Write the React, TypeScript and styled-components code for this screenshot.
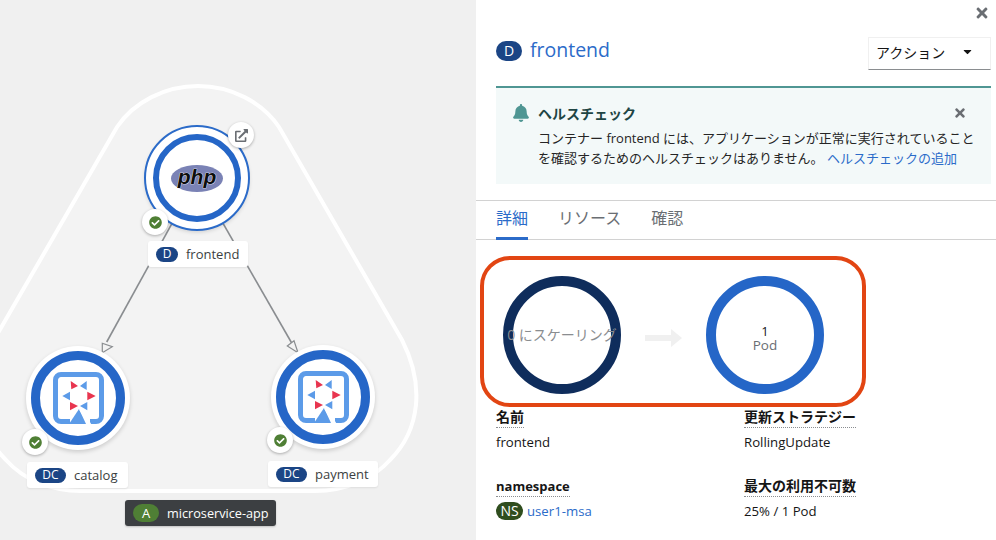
import React from "react";
import styled, { createGlobalStyle } from "styled-components";
import { FaBell, FaCaretDown, FaCheckCircle, FaExternalLinkAlt, FaTimes } from "react-icons/fa";

const FONT = `"Open Sans", "Noto Sans CJK JP", sans-serif`;

const GlobalStyle = createGlobalStyle`
  html, body {
    margin: 0;
    height: 540px;
    overflow: hidden;
    background: #fff;
    font-family: ${FONT};
  }
`;

const Page = styled.div`
  display: flex;
  width: 996px;
  height: 540px;
  overflow: hidden;
  color: #151515;
  font-size: 14px;
`;

const Canvas = styled.div`
  position: relative;
  flex: 0 0 476px;
  height: 540px;
  overflow: hidden;
  background: #f0f0f0;
`;

const Backdrop = styled.svg`
  position: absolute;
  inset: 0;
`;

const Node = styled.div<{ $x: number; $y: number }>`
  position: absolute;
  left: ${(p) => p.$x - 52}px;
  top: ${(p) => p.$y - 52}px;
  width: 104px;
  height: 104px;
  box-sizing: border-box;
  display: flex;
  align-items: center;
  justify-content: center;
  border-radius: 50%;
  background: #fff;
  box-shadow: 0 2px 4px rgba(3, 3, 3, 0.16);
`;

const SelectedRim = styled.div`
  position: absolute;
  inset: -1px;
  border: 2px solid #2b6bc9;
  border-radius: 50%;
`;

const NodeRing = styled.div<{ $size: number; $width: number }>`
  flex: none;
  box-sizing: border-box;
  width: ${(p) => p.$size}px;
  height: ${(p) => p.$size}px;
  display: flex;
  align-items: center;
  justify-content: center;
  border: ${(p) => p.$width}px solid #2566c7;
  border-radius: 50%;
  background: #fff;
  svg {
    flex: none;
  }
`;

const RoundBadge = styled.div<{ $x: number; $y: number }>`
  position: absolute;
  left: ${(p) => p.$x - 13}px;
  top: ${(p) => p.$y - 13}px;
  width: 26px;
  height: 26px;
  display: flex;
  align-items: center;
  justify-content: center;
  border-radius: 50%;
  background: #fff;
  box-shadow: 0 1px 3px rgba(3, 3, 3, 0.3);
  color: #4f7f35;
  font-size: 13px;
  svg.link {
    color: #6a6e73;
    font-size: 13px;
  }
`;

const NodeLabel = styled.div<{ $x: number; $y: number; $w: number; $dark?: boolean }>`
  position: absolute;
  left: ${(p) => p.$x}px;
  top: ${(p) => p.$y}px;
  width: ${(p) => p.$w}px;
  height: 26px;
  box-sizing: border-box;
  display: flex;
  align-items: center;
  gap: 8px;
  padding-left: 8px;
  border-radius: 3px;
  background: ${(p) => (p.$dark ? "#3c3f42" : "#fff")};
  color: ${(p) => (p.$dark ? "#fff" : "#3c3f42")};
  font-size: ${(p) => (p.$dark ? 12.7 : 13)}px;
  box-shadow: ${(p) => (p.$dark ? "0 1px 2px rgba(3,3,3,.2)" : "0 1px 2px rgba(3,3,3,.08)")};
`;

const KindBadge = styled.span<{ $bg: string; $w?: number; $h?: number; $fs?: number }>`
  flex: none;
  display: inline-flex;
  align-items: center;
  justify-content: center;
  width: ${(p) => p.$w ?? 25}px;
  height: ${(p) => p.$h ?? 15}px;
  border-radius: 10px;
  background: ${(p) => p.$bg};
  color: #fff;
  font-size: ${(p) => p.$fs ?? 12}px;
  line-height: 1;
`;

const Panel = styled.div`
  flex: 1;
  box-sizing: border-box;
  height: 540px;
  display: flex;
  flex-direction: column;
  background: #fff;
  > * {
    flex-shrink: 0;
  }
`;

const CloseRow = styled.div`
  height: 37px;
  display: flex;
  justify-content: flex-end;
  padding: 5px 6px 0 0;
  box-sizing: border-box;
  color: #6a6e73;
  font-size: 16px;
`;

const Header = styled.div`
  display: flex;
  justify-content: space-between;
  height: 49px;
  padding: 0 5px 0 20px;
`;

const TitleWrap = styled.div`
  display: flex;
  align-items: center;
  gap: 8px;
  height: 28px;
`;

const Title = styled.h1`
  margin: -3px 0 0;
  color: #2b6bc9;
  font-size: 19.5px;
  font-weight: 500;
`;

const ActionSelect = styled.div`
  box-sizing: border-box;
  width: 123px;
  height: 33px;
  display: flex;
  align-items: center;
  justify-content: space-between;
  padding: 0 16px 4px 7px;
  border: 1px solid #f0f0f0;
  border-bottom: 1px solid #8a8d90;
  font-size: 14px;
  svg {
    font-size: 13px;
  }
`;

const Alert = styled.div`
  box-sizing: border-box;
  margin: 0 5px 0 20px;
  height: 98px;
  padding: 15px 24px 0 16px;
  display: grid;
  grid-template-columns: 26px 1fr 14px;
  grid-template-rows: 21px auto;
  background: #f3f9f9;
  border-top: 2px solid #4f9693;
`;

const AlertIcon = styled.div`
  color: #4f9693;
  font-size: 18px;
  line-height: 1;
  margin-top: 1px;
`;

const AlertTitle = styled.div`
  color: #1e4544;
  font-weight: 700;
  font-size: 14px;
`;

const AlertClose = styled.div`
  color: #6a6e73;
  font-size: 14px;
  line-height: 1;
  margin-top: 3px;
`;

const AlertBody = styled.div`
  grid-column: 2 / 4;
  margin-top: 4px;
  font-size: 13px;
  line-height: 20px;
  color: #252525;
  white-space: nowrap;
`;

const Link = styled.a`
  color: #2b6bc9;
`;

const Tabs = styled.div`
  display: flex;
  gap: 30px;
  height: 40px;
  box-sizing: border-box;
  margin-top: 16px;
  padding-left: 20px;
  border-top: 1px solid #d2d2d2;
  border-bottom: 1px solid #d2d2d2;
`;

const Tab = styled.div<{ $active?: boolean }>`
  height: 39px;
  box-sizing: border-box;
  padding-top: 4px;
  font-size: 16px;
  color: ${(p) => (p.$active ? "#2b6bc9" : "#6a6e73")};
  border-bottom: ${(p) => (p.$active ? "3px solid #2b6bc9" : "none")};
`;

const PodRow = styled.div`
  position: relative;
  margin-top: 36px;
  height: 118px;
  padding-left: 27px;
  display: flex;
  align-items: center;
`;

const Annotation = styled.div`
  position: absolute;
  left: 4px;
  top: -20px;
  width: 386px;
  height: 151px;
  box-sizing: border-box;
  border: 4px solid #e24513;
  border-radius: 30px;
`;

const PodRing = styled.div<{ $color: string }>`
  flex: none;
  box-sizing: border-box;
  width: 118px;
  height: 118px;
  display: flex;
  flex-direction: column;
  align-items: center;
  justify-content: center;
  border: 10px solid ${(p) => p.$color};
  border-radius: 50%;
  white-space: nowrap;
  font-size: 13px;
  line-height: 14px;
`;

const ScalingText = styled.span`
  color: #8a8d90;
  font-size: 14px;
`;

const PodCount = styled.div`
  display: flex;
  flex-direction: column;
  align-items: center;
  padding-top: 6px;
`;

const PodUnit = styled.span`
  color: #6a6e73;
  font-size: 13.5px;
`;

const FlowArrow = styled.svg`
  flex: none;
  margin: 6px 23px 0 24px;
`;

const Details = styled.div`
  display: grid;
  grid-template-columns: 248px 1fr;
  grid-auto-rows: 69px;
  margin-top: 13px;
  padding-left: 20px;
`;

const Term = styled.div<{ $latin?: boolean }>`
  width: fit-content;
  font-weight: 700;
  font-size: ${(p) => (p.$latin ? 13 : 14)}px;
  line-height: 20px;
  border-bottom: 1px dotted #8a8d90;
`;

const Value = styled.div`
  display: flex;
  align-items: center;
  gap: 4px;
  margin-top: 4px;
  font-size: 13.2px;
  line-height: 20px;
`;

// box is 51 x 52, triangles read off the reference
const QuarkusIcon: React.FC = () => (
  <svg width="51" height="53" viewBox="0 0 51 53">
    <path d="M17 49.5H8a5.5 5.5 0 0 1-5.5-5.5V8A5.5 5.5 0 0 1 8 2.5h35A5.5 5.5 0 0 1 48.5 8v36a5.5 5.5 0 0 1-5.5 5.5h-6" fill="none" stroke="#5c9be8" strokeWidth="5" />
    <path d="M26 37L16 52H33Z" fill="#5c9be8" />
    <path d="M27.5 37L37 53" stroke="#fff" strokeWidth="3" />
    <path d="M17.7 9L25 14L18.3 17.3ZM42.7 24L34.3 19.7V28.3ZM17 30L25 34L17 38.3Z" fill="#e8354f" />
    <path d="M33.7 9L27 14L33.7 18ZM9.3 24L17 19.7V28.3ZM34.3 30L27 34L34.3 38.3Z" fill="#5c9be8" />
  </svg>
);

const PhpLogo: React.FC = () => (
  <svg width="52" height="27" viewBox="0 0 52 27">
    <ellipse cx="26" cy="13.5" rx="26" ry="13.5" fill="#7a82b5" />
    <text x="26" y="18.5" textAnchor="middle" fontFamily="Liberation Sans" fontWeight="700" fontStyle="italic" fontSize="21" fill="#0d0d0d" stroke="#fff" strokeWidth="0.7" paintOrder="stroke">
      php
    </text>
  </svg>
);

const App: React.FC = () => (
  <Page>
    <GlobalStyle />
    <Canvas>
      <Backdrop width="476" height="540" viewBox="0 0 476 540">
        <path
          d="M198 86C231 86 262 102 279 127L402 340C425 385 420 430 390 460C372 480 345 491 315 491H81C51 491 24 480 6 460C-24 430 -29 385 -6 340L117 127C134 102 165 86 198 86Z"
          fill="#f3f3f3"
          stroke="#fff"
          strokeWidth="4"
        />
        <g stroke="#8a8d90" strokeWidth="1.6" fill="#f3f3f3">
          <line x1="197" y1="178" x2="106.7" y2="342" />
          <line x1="197" y1="178" x2="291.7" y2="343" />
          <path d="M102.3 352.7V343.3L112.3 346.7Z" strokeWidth="1.2" />
          <path d="M298 352.7L287.3 346L294 340.7Z" strokeWidth="1.2" />
        </g>
      </Backdrop>

      <Node $x={197} $y={178}>
        <SelectedRim />
        <NodeRing $size={88} $width={6.5}>
          <PhpLogo />
        </NodeRing>
      </Node>
      <RoundBadge $x={241} $y={135}>
        <FaExternalLinkAlt className="link" />
      </RoundBadge>
      <RoundBadge $x={155} $y={222}>
        <FaCheckCircle />
      </RoundBadge>
      <NodeLabel $x={148} $y={241} $w={100}>
        <KindBadge $bg="#1b4585" $w={22}>D</KindBadge>
        frontend
      </NodeLabel>

      <Node $x={78} $y={398}>
        <NodeRing $size={94} $width={9}>
          <QuarkusIcon />
        </NodeRing>
      </Node>
      <RoundBadge $x={35} $y={442}>
        <FaCheckCircle />
      </RoundBadge>
      <NodeLabel $x={27} $y={462} $w={101}>
        <KindBadge $bg="#1b4585" $w={31}>DC</KindBadge>
        catalog
      </NodeLabel>

      <Node $x={323} $y={397}>
        <NodeRing $size={94} $width={9}>
          <QuarkusIcon />
        </NodeRing>
      </Node>
      <RoundBadge $x={280} $y={440}>
        <FaCheckCircle />
      </RoundBadge>
      <NodeLabel $x={268} $y={461} $w={110}>
        <KindBadge $bg="#1b4585" $w={31}>DC</KindBadge>
        payment
      </NodeLabel>

      <NodeLabel $x={125} $y={500} $w={151} $dark>
        <KindBadge $bg="#4f7f35" $w={26} $h={18} $fs={13}>A</KindBadge>
        microservice-app
      </NodeLabel>
    </Canvas>

    <Panel>
      <CloseRow>
        <FaTimes />
      </CloseRow>
      <Header>
        <TitleWrap>
          <KindBadge $bg="#1b4585" $w={26} $h={20} $fs={14}>D</KindBadge>
          <Title>frontend</Title>
        </TitleWrap>
        <ActionSelect>
          アクション
          <FaCaretDown />
        </ActionSelect>
      </Header>
      <Alert>
        <AlertIcon>
          <FaBell />
        </AlertIcon>
        <AlertTitle>ヘルスチェック</AlertTitle>
        <AlertClose>
          <FaTimes />
        </AlertClose>
        <AlertBody>
          コンテナー frontend には、アプリケーションが正常に実行されていること
          <br />
          を確認するためのヘルスチェックはありません。 <Link>ヘルスチェックの追加</Link>
        </AlertBody>
      </Alert>
      <Tabs>
        <Tab $active>詳細</Tab>
        <Tab>リソース</Tab>
        <Tab>確認</Tab>
      </Tabs>
      <PodRow>
        <PodRing $color="#0f2d5c">
          <ScalingText>0 にスケーリング</ScalingText>
        </PodRing>
        <FlowArrow width="38" height="18" viewBox="0 0 38 18">
          <path d="M0 6H26V0L37 9L26 18V12H0Z" fill="#f0f0f0" />
        </FlowArrow>
        <PodRing $color="#2566c7">
          <PodCount>
            <span>1</span>
            <PodUnit>Pod</PodUnit>
          </PodCount>
        </PodRing>
        <Annotation />
      </PodRow>
      <Details>
        <div>
          <Term>名前</Term>
          <Value>frontend</Value>
        </div>
        <div>
          <Term>更新ストラテジー</Term>
          <Value>RollingUpdate</Value>
        </div>
        <div>
          <Term $latin>namespace</Term>
          <Value>
            <KindBadge $bg="#2f4d1e" $w={27} $h={18} $fs={14}>NS</KindBadge>
            <Link>user1-msa</Link>
          </Value>
        </div>
        <div>
          <Term>最大の利用不可数</Term>
          <Value>25% / 1 Pod</Value>
        </div>
      </Details>
    </Panel>
  </Page>
);

export default App;
